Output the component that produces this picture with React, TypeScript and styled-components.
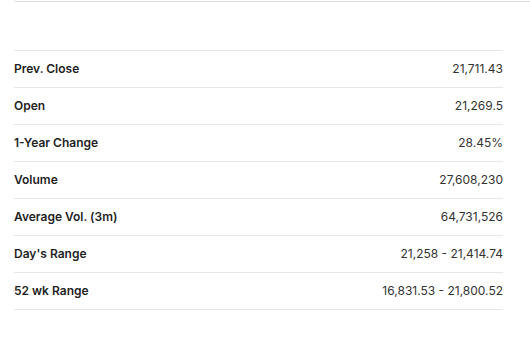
import React from "react";
import styled, { createGlobalStyle } from "styled-components";

const Global = createGlobalStyle`
  html, body { margin: 0; padding: 0; background: #fff; overflow: hidden; }
  body { font-family: Inter, "Noto Sans", sans-serif; }
`;

const Page = styled.div`
  width: 530px;
  height: 355px;
  padding: 0 27px 0 14px;
  box-sizing: border-box;
  display: flex;
  flex-direction: column;
`;

const CardEdge = styled.div`
  height: 1px;
  margin-right: -40px;
  border: 1px solid #dedede;
  border-top: none;
  border-radius: 0 0 0 4px;
`;

const Table = styled.div`
  margin-top: 48px;
  display: flex;
  flex-direction: column;
`;

const Row = styled.div`
  height: 37px;
  box-sizing: border-box;
  padding-bottom: 2px;
  border-top: 1px solid #e8e8e8;
  display: flex;
  align-items: center;
  justify-content: space-between;
  font-size: 12px;
  &:last-child { border-bottom: 1px solid #e8e8e8; height: 38px; }
`;

const Label = styled.span`
  font-weight: 600;
  color: #1f1f1f;
`;

const Value = styled.span`
  font-weight: 400;
  color: #333;
`;

const rows: [string, string][] = [
  ["Prev. Close", "21,711.43"],
  ["Open", "21,269.5"],
  ["1-Year Change", "28.45%"],
  ["Volume", "27,608,230"],
  ["Average Vol. (3m)", "64,731,526"],
  ["Day's Range", "21,258 - 21,414.74"],
  ["52 wk Range", "16,831.53 - 21,800.52"],
];

export default function App() {
  return (
    <>
      <Global />
      <Page>
        <CardEdge />
        <Table>
          {rows.map(([l, v]) => (
            <Row key={l}>
              <Label>{l}</Label>
              <Value>{v}</Value>
            </Row>
          ))}
        </Table>
      </Page>
    </>
  );
}
